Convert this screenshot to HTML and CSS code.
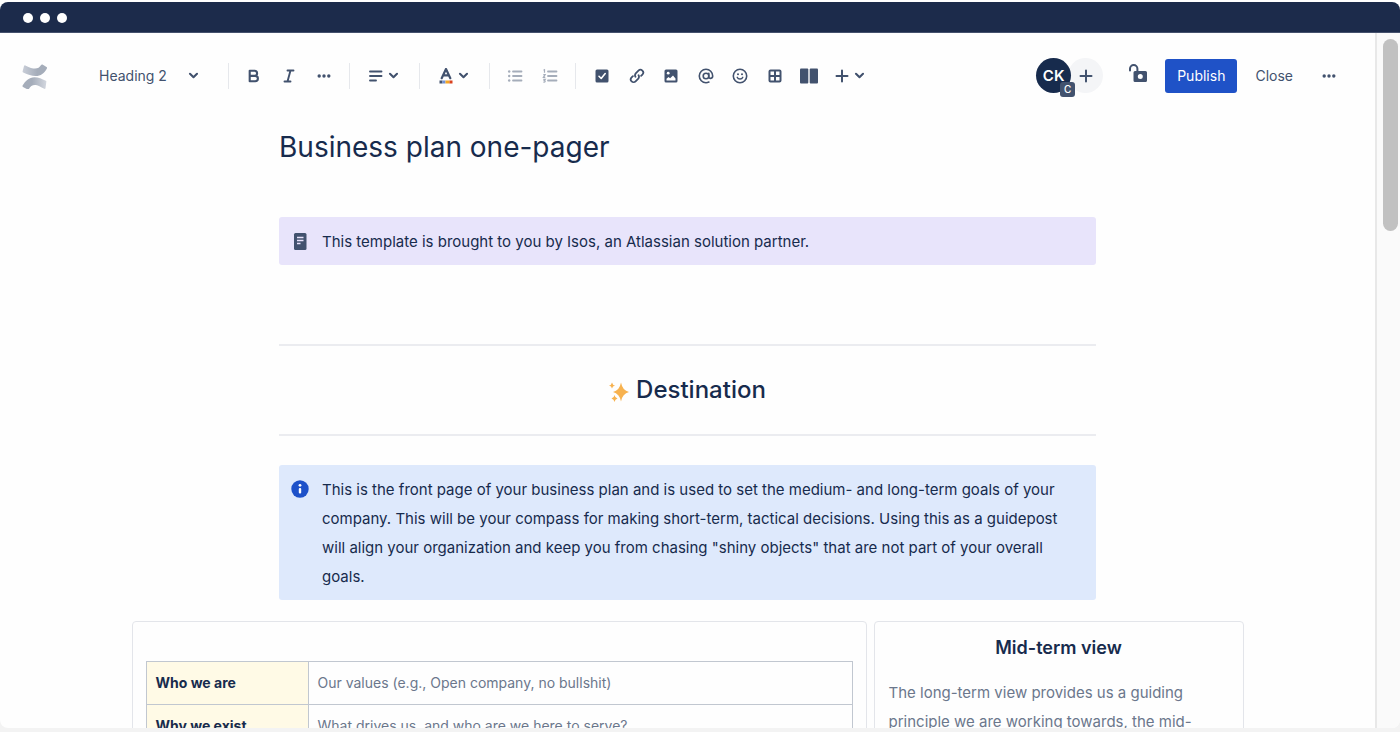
FILE: index.html
```html
<!DOCTYPE html>
<html lang="en">
<head>
<meta charset="utf-8">
<title>Business plan one-pager</title>
<link rel="stylesheet" href="styles.css">
</head>
<body>
<svg class="sprite" aria-hidden="true">
  <symbol id="chevron" viewBox="0 0 10 10"><path d="M1.8 3.4 5 6.6 8.2 3.4" fill="none" stroke="currentColor" stroke-width="1.900" stroke-linecap="round" stroke-linejoin="round"/></symbol>
  <symbol id="more" viewBox="0 0 16 16"><g fill="currentColor"><circle cx="3.200" cy="8" r="1.700"/><circle cx="8" cy="8" r="1.700"/><circle cx="12.800" cy="8" r="1.700"/></g></symbol>
  <symbol id="plus" viewBox="0 0 16 16"><path d="M8 2.500v11M2.500 8h11" fill="none" stroke="currentColor" stroke-width="2" stroke-linecap="round"/></symbol>
</svg>
<div class="window">
  <div class="titlebar"><span class="light"></span><span class="light"></span><span class="light"></span></div>
  <div class="viewport">
    <main class="editor">
      <header class="toolbar">
        <a class="logo" href="#" aria-label="Confluence">
          <svg viewBox="0 0 26 26" width="26" height="26">
            <defs>
              <linearGradient id="lg1" x1="0" x2="1" y1="0" y2="0"><stop offset="0" stop-color="#c9ced8"/><stop offset=".6" stop-color="#a5adba"/></linearGradient>
              <linearGradient id="lg2" x1="1" x2="0" y1="0" y2="0"><stop offset="0" stop-color="#d3d7df"/><stop offset=".6" stop-color="#a5adba"/></linearGradient>
            </defs>
            <path d="M3.300 2.400C8 4.700 10.500 5.600 13 5.600c3 0 4.500-1.300 6.100-3.600.3-.6.9-.7 1.400-.4l4 2.400c.6.300.7.900.4 1.400C22.200 10 19 13 13.500 13c-4 0-7.500-1.300-12.300-3.500-.6-.3-.8-.8-.5-1.400L2 3c.3-.6.800-.8 1.300-.6z" fill="url(#lg1)"/>
            <path d="M22.300 25.800C17.600 23.500 15.500 22 13 22c-3 0-4.600 1.500-6.100 4-.3.600-.9.700-1.400.4L1 23.900c-.6-.3-.7-.9-.4-1.400C3.300 18 7 14.200 12.500 14.200c4 0 7.500 1.700 11.300 3.500.6.300.8.800.5 1.400l-.8 6.100c-.2.600-.7.900-1.200.6z" fill="url(#lg2)"/>
          </svg>
        </a>
        <div class="style-picker">
          <select aria-label="Text style"><option>Heading 2</option></select>
          <svg class="chev"><use href="#chevron"/></svg>
        </div>
        <span class="divider"></span>
        <div class="group">
          <button class="tool" aria-label="Bold"><svg viewBox="0 0 16 16"><path d="M3.700 2.700h4.800a2.600 2.600 0 0 1 0 5.200H3.700zM3.700 7.900h5.500a2.700 2.700 0 0 1 0 5.400H3.700z" fill="none" stroke="currentColor" stroke-width="2.100" stroke-linejoin="round"/></svg></button>
          <button class="tool" aria-label="Italic"><svg viewBox="0 0 16 16"><path d="M6.500 2.500h6M3.500 13.500h6M9.500 2.500l-3 11" fill="none" stroke="currentColor" stroke-width="1.900" stroke-linecap="round"/></svg></button>
          <button class="tool" aria-label="More formatting"><svg><use href="#more"/></svg></button>
        </div>
        <span class="divider"></span>
        <button class="tool menu" aria-label="Alignment"><svg viewBox="0 0 16 16"><path d="M2 3.500h11.500M2 8h11.500M2 12.500h6" fill="none" stroke="currentColor" stroke-width="1.900" stroke-linecap="round"/></svg><svg class="chev"><use href="#chevron"/></svg></button>
        <span class="divider"></span>
        <button class="tool menu" aria-label="Text colour"><svg viewBox="0 0 16 16"><path d="M3.700 10.200 8 1l4.300 9.200M5 7.300h6" fill="none" stroke="currentColor" stroke-width="2.200" stroke-linecap="round" stroke-linejoin="round"/><path d="M1.500 12.500h3v3h-3z" fill="#42526e"/><path d="M4.500 12.500h3v3h-3z" fill="#6f8fd6"/><path d="M7.500 12.500h4v3h-4z" fill="#f5a623"/><path d="M11.500 12.500h3v3h-3z" fill="#d9411e"/></svg><svg class="chev"><use href="#chevron"/></svg></button>
        <span class="divider"></span>
        <div class="group muted">
          <button class="tool" aria-label="Bullet list"><svg viewBox="0 0 16 16"><path d="M6 3.500h8.500M6 8h8.500M6 12.500h8.500" stroke="currentColor" stroke-width="1.800" stroke-linecap="round"/><g fill="currentColor"><circle cx="2.200" cy="3.500" r="1.200"/><circle cx="2.200" cy="8" r="1.200"/><circle cx="2.200" cy="12.500" r="1.200"/></g></svg></button>
          <button class="tool" aria-label="Numbered list"><svg viewBox="0 0 16 16"><path d="M6 3.500h8.500M6 8h8.500M6 12.500h8.500" stroke="currentColor" stroke-width="1.800" stroke-linecap="round"/><path d="M1.500 2.200l1-.5v3M1.300 6.700h1.800L1.400 9.300h1.900M1.300 11.300h1.900l-1 1.200c1.600.2 1.200 2-.9 1.500" fill="none" stroke="currentColor" stroke-width="1.200"/></svg></button>
        </div>
        <span class="divider"></span>
        <div class="group inserts">
          <button class="tool" aria-label="Action item"><svg viewBox="0 0 16 16"><rect x="1.500" y="1.500" width="13" height="13" rx="1.500" fill="currentColor"/><path d="M5 8.300l2.200 2.200 4-5" fill="none" stroke="#fff" stroke-width="1.600" stroke-linecap="round" stroke-linejoin="round"/></svg></button>
          <button class="tool" aria-label="Link"><svg viewBox="0 0 16 16"><g transform="rotate(-45 8 8)" fill="none" stroke="currentColor" stroke-width="1.800" stroke-linecap="round"><path d="M9.600 8.600A3 3 0 0 1 7 10.800H3.200a2.800 2.800 0 0 1-2.800-2.800 2.800 2.800 0 0 1 2.800-2.800H5"/><path d="M6.400 7.400A3 3 0 0 1 9 5.200h3.800A2.800 2.800 0 0 1 15.600 8a2.800 2.800 0 0 1-2.800 2.800H11"/></g></svg></button>
          <button class="tool" aria-label="Image"><svg viewBox="0 0 16 16"><rect x="1.500" y="1.500" width="13" height="13" rx="1.500" fill="currentColor"/><circle cx="5.200" cy="5.200" r="1.400" fill="#fff"/><path d="M3.500 12.500v-1.800l2-1.700 1.600 1.300L10 7.500l2.500 3v2z" fill="#fff"/></svg></button>
          <button class="tool" aria-label="Mention"><svg viewBox="0 0 16 16"><circle cx="8" cy="8" r="2.800" fill="none" stroke="currentColor" stroke-width="1.600"/><path d="M10.800 5.300v3.500c0 2.400 3.900 2.100 3.900-.8A6.700 6.700 0 1 0 8 14.700c1.200 0 2-.2 2.900-.6" fill="none" stroke="currentColor" stroke-width="1.600" stroke-linecap="round"/></svg></button>
          <button class="tool" aria-label="Emoji"><svg viewBox="0 0 16 16"><circle cx="8" cy="8" r="6.700" fill="none" stroke="currentColor" stroke-width="1.600"/><circle cx="6" cy="6.300" r="1" fill="currentColor"/><circle cx="10" cy="6.300" r="1" fill="currentColor"/><path d="M5.200 9.300c.9 2.300 4.700 2.300 5.600 0" fill="none" stroke="currentColor" stroke-width="1.400" stroke-linecap="round"/></svg></button>
          <button class="tool" aria-label="Table"><svg viewBox="0 0 16 16"><path d="M3.500 2.500h9a1 1 0 0 1 1 1v9a1 1 0 0 1-1 1h-9a1 1 0 0 1-1-1v-9a1 1 0 0 1 1-1zM8 2.500v11M2.500 8h11" fill="none" stroke="currentColor" stroke-width="2"/></svg></button>
          <button class="tool" aria-label="Layouts"><svg class="layouts" viewBox="0 0 18 16"><rect x="0" y=".5" width="8.300" height="15" rx="1" fill="currentColor"/><rect x="9.700" y=".5" width="8.300" height="15" rx="1" fill="currentColor"/></svg></button>
        </div>
        <button class="tool menu insert-menu" aria-label="Insert"><svg><use href="#plus"/></svg><svg class="chev"><use href="#chevron"/></svg></button>
        <div class="actions">
          <div class="people">
            <span class="avatar">CK<span class="badge">C</span></span>
            <button class="invite" aria-label="Invite"><svg><use href="#plus"/></svg></button>
          </div>
          <button class="tool lock" aria-label="Restrictions"><svg viewBox="0 0 20 20"><path d="M2 7.500V5.800a3.700 3.700 0 0 1 7.400 0V8.500" fill="none" stroke="currentColor" stroke-width="2" stroke-linecap="round"/><path fill-rule="evenodd" d="M7 8h10.500a1.500 1.500 0 0 1 1.500 1.500v8a1.500 1.500 0 0 1-1.500 1.500H7a1.500 1.500 0 0 1-1.500-1.500v-8A1.500 1.500 0 0 1 7 8zm5.300 3a2.500 2.500 0 1 0 0 5 2.500 2.500 0 0 0 0-5z" fill="currentColor"/></svg></button>
          <button class="publish">Publish</button>
          <button class="close">Close</button>
          <button class="tool" aria-label="More actions"><svg><use href="#more"/></svg></button>
        </div>
      </header>

      <article class="page">
        <h1>Business plan one-pager</h1>
        <section class="panel note">
          <svg class="panel-icon" viewBox="0 0 18 18"><rect x="3" y="1" width="12.500" height="17" rx="1.500" fill="#42526e"/><path d="M6 5.500h6.500M6 8.500h6.500M6 11.500h3.500" stroke="#e9e4fc" stroke-width="1.500"/></svg>
          <p>This template is brought to you by Isos, an Atlassian solution partner.</p>
        </section>
        <hr>
        <h2><svg class="sparkles" viewBox="0 0 20 20" aria-hidden="true"><g fill="#f7b24f"><path d="M12 0.500q1.500 8 8 9.500q-6.500 1.500-8 9.500q-1.500-8-8-9.500q6.500-1.500 8-9.500z"/><path d="M3 .5q.5 2.500 3 3q-2.500.5-3 3q-.5-2.500-3-3q2.500-.5 3-3z"/><path d="M5.500 13q.5 3 3 3.500q-2.500.5-3 3.500q-.5-3-3-3.500q2.500-.5 3-3.500z"/></g></svg>Destination</h2>
        <hr>
        <section class="panel info">
          <svg class="panel-icon" viewBox="0 0 18 18"><circle cx="9" cy="9" r="8.700" fill="#1d51c9"/><circle cx="9" cy="5.300" r="1.400" fill="#fff"/><rect x="7.800" y="8" width="2.400" height="5.500" rx="1" fill="#fff"/></svg>
          <p>This is the front page of your business plan and is used to set the medium- and long-term goals of your company. This will be your compass for making short-term, tactical decisions. Using this as a guidepost will align your organization and keep you from chasing "shiny objects" that are not part of your overall goals.</p>
        </section>
      </article>

      <div class="columns">
        <section class="column">
          <table>
            <tr><th scope="row">Who we are</th><td>Our values (e.g., Open company, no bullshit)</td></tr>
            <tr><th scope="row">Why we exist</th><td>What drives us, and who are we here to serve?</td></tr>
          </table>
        </section>
        <section class="column side">
          <h3>Mid-term view</h3>
          <p>The long-term view provides us a guiding principle we are working towards, the mid-</p>
        </section>
      </div>
    </main>
    <div class="scrollbar"><div class="thumb"></div></div>
  </div>
</div>
</body>
</html>
```
FILE: styles.css
```css
* { box-sizing: border-box; }
body { margin: 0; background: #f3f3f3; color: #172b4d; font: 15px/29px Inter, "Liberation Sans", sans-serif; }
h1, h2, h3, p { margin: 0; }
button, select { font: inherit; color: inherit; border: 0; background: none; padding: 0; margin: 0; }
.sprite { display: none; }
.window { height: 100vh; padding: 2px 0 4px; display: flex; flex-direction: column; background: linear-gradient(#fff 50%, #f3f3f3 50%); overflow: hidden; }
.titlebar { flex: none; height: 31px; background: #1c2b4b; border-radius: 8px 8px 0 0; display: flex; align-items: center; gap: 7px; padding: 2px 0 0 23px; border-bottom: 1px solid #45516d; }
.light { width: 10px; height: 10px; border-radius: 50%; background: #fff; }
.viewport { flex: 1; min-height: 0; display: flex; background: #fefefe; border-radius: 0 0 8px 8px; overflow: hidden; }
.editor { flex: 1; min-width: 0; overflow: hidden; }
.scrollbar { width: 25px; border-left: 2px solid #e8e8e8; background: #fafafa; padding: 6px 2px 0 6px; }
.thumb { height: 192px; border-radius: 8px; background: #c1c1c1; }

.toolbar { display: flex; align-items: center; padding: 25px 35px 0 22px; color: #42526e; }
.logo { display: flex; margin-right: 51px; }
.style-picker { position: relative; width: 100px; margin-right: 15px; font-size: 14px; display: flex; align-items: center; }
.style-picker select { appearance: none; width: 100%; height: 32px; }
.style-picker .chev { position: absolute; right: 0; pointer-events: none; }
.divider { flex: none; width: 1px; height: 26px; margin: 0 14px; background: #e6e8ec; }
.group { display: flex; gap: 13px; }
.inserts { width: 229px; gap: 0; margin-left: 1px; justify-content: space-between; }
.tool { flex: none; width: 22px; height: 32px; display: flex; align-items: center; justify-content: center; }
.tool svg, .invite svg { width: 16px; height: 16px; flex: none; }
.tool .layouts { width: 18px; }
.tool.menu { width: 41px; gap: 4px; padding-right: 3px; }
svg.chev, .tool svg.chev { width: 11px; height: 11px; }
.muted { color: #a5adba; }
.insert-menu { margin-left: 10px; }
.actions { margin-left: auto; display: flex; align-items: center; font-size: 14px; }
.people { display: flex; align-items: center; margin-right: 25px; }
.avatar { position: relative; width: 35px; height: 35px; border-radius: 50%; background: #172b4d; color: #fff; font-size: 15px; font-weight: 600; line-height: 35px; text-align: center; z-index: 1; }
.badge { position: absolute; right: -4px; bottom: -4px; width: 15px; height: 15px; border-radius: 3px; background: #42526e; font-size: 10px; font-weight: 500; line-height: 15px; }
.invite { width: 35px; height: 35px; margin-left: -3px; border-radius: 50%; background: #f4f5f7; display: flex; align-items: center; justify-content: center; }
.tool.lock { width: 20px; margin-right: 17px; padding-bottom: 6px; }
.tool.lock svg { width: 20px; height: 20px; }
.publish { height: 34px; padding: 0 12px; border-radius: 3px; background: #1f52c7; color: #fff; }
.close { margin: 0 25px 0 18px; }

.page { width: 817px; max-width: 100%; margin: 0 auto; }
h1 { margin-top: 36px; font-size: 28px; font-weight: 400; line-height: 37px; }
.panel { display: flex; gap: 13px; border-radius: 3px; padding: 10px 13px 9px 12px; }
.panel-icon { flex: none; width: 18px; height: 18px; margin-top: 5px; }
.note { margin-top: 51px; background: #e8e4fb; }
.info { background: #dee9fc; }
hr { height: 2px; border: 0; margin: 0; background: #ebecf0; }
.note + hr { margin-top: 79px; }
h2 { display: flex; align-items: center; justify-content: center; gap: 7px; margin: 29px 0; font-size: 24px; font-weight: 500; line-height: 30px; }
.sparkles { width: 20px; height: 20px; margin-top: 4px; }
h2 + hr { margin-bottom: 29px; }

.columns { width: 1112px; max-width: 100%; margin: 21px auto 0; display: grid; grid-template-columns: 735fr 370fr; gap: 7px; }
.column { min-width: 0; border: 1px solid #e3e5ea; border-radius: 4px; padding: 39px 13px 13px; }
.side { padding: 11px 14px; color: #6b778c; }
table { width: 100%; border-collapse: collapse; font-size: 14px; line-height: 24px; }
th, td { border: 1px solid #c1c7d0; padding: 9px; text-align: left; height: 43px; }
th { width: 162px; background: #fffae6; font-weight: 700; }
td { color: #6b778c; }
h3 { color: #172b4d; font-size: 18px; font-weight: 600; line-height: 29px; text-align: center; margin-bottom: 16px; }
```
